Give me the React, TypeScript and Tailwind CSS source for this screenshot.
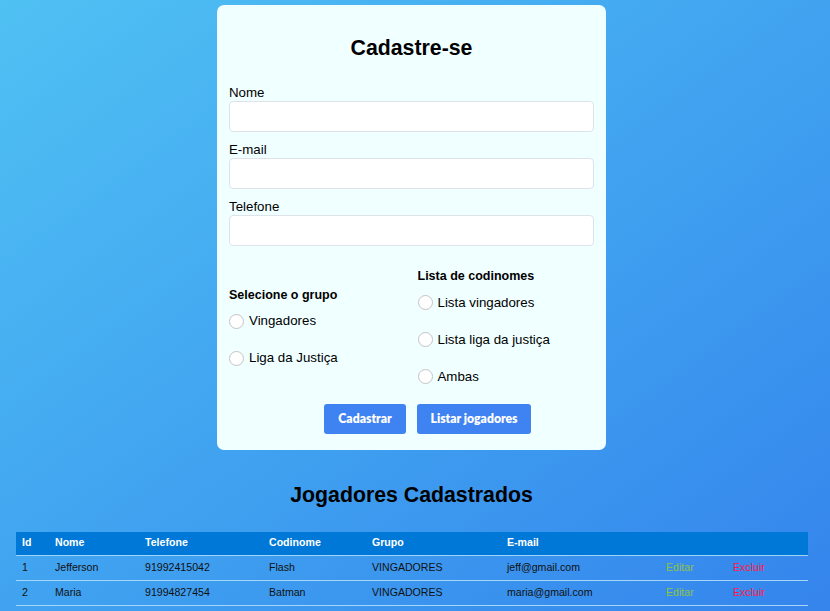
import React from "react";

const Radio = ({ label }: { label: string }) => (
  <div className="flex h-[37px] items-center">
    <span className="mr-[5px] inline-block h-[15px] w-[15px] rounded-full border border-[#c4c4c4] bg-white" />
    <span className="text-[13.3px] text-black">{label}</span>
  </div>
);

const Field = ({ label }: { label: string }) => (
  <div className="flex flex-col">
    <label className="h-[16px] text-[13.3px] leading-[16px] text-black">{label}</label>
    <div className="h-[31px] rounded-[4px] border border-[#dde3e8] bg-white" />
  </div>
);

const rows = [
  { id: 1, nome: "Jefferson", tel: "91992415042", cod: "Flash", grupo: "VINGADORES", email: "jeff@gmail.com" },
  { id: 2, nome: "Maria", tel: "91994827454", cod: "Batman", grupo: "VINGADORES", email: "maria@gmail.com" },
];

export default function App() {
  return (
    <div
      className="min-h-[611px] w-[830px] bg-gradient-to-br from-[#50c1f3] to-[#3584ec]"
      style={{ fontFamily: '"Liberation Sans", Arial, sans-serif' }}
    >
      <div className="flex w-[823px] flex-col items-center pt-[5px]">
        <div className="w-[389px] rounded-[7px] bg-[#f0ffff] px-[12px] pb-[16px] pt-[31px]">
          <h2 className="text-center text-[21.3px] font-bold leading-[24px] text-black">Cadastre-se</h2>
          <div className="mt-[25px] flex flex-col gap-[10px]">
            <Field label="Nome" />
            <Field label="E-mail" />
            <Field label="Telefone" />
          </div>
          <div className="mt-[22px] grid grid-cols-2 items-center gap-x-3">
            <div className="flex flex-col">
              <div className="h-[16px] text-[12.5px] font-bold leading-[16px] text-black">Selecione o grupo</div>
              <Radio label="Vingadores" />
              <Radio label="Liga da Justiça" />
            </div>
            <div className="flex flex-col">
              <div className="h-[16px] text-[12.5px] font-bold leading-[16px] text-black">Lista de codinomes</div>
              <Radio label="Lista vingadores" />
              <Radio label="Lista liga da justiça" />
              <Radio label="Ambas" />
            </div>
          </div>
          <div className="mt-[9px] flex gap-[11px] pl-[95px]" style={{ fontFamily: "Lato, sans-serif" }}>
            <button className="h-[30px] w-[82px] rounded-[3px] bg-[#3f83f2] text-[12.2px] font-extrabold text-white">
              Cadastrar
            </button>
            <button className="h-[30px] w-[114px] rounded-[3px] bg-[#3f83f2] text-[12.2px] font-extrabold text-white">
              Listar jogadores
            </button>
          </div>
        </div>
        <h2 className="mt-[33px] text-center text-[21.3px] font-bold leading-[24px] text-black">
          Jogadores Cadastrados
        </h2>
        <table className="ml-[16px] mt-[25px] w-[792px] self-start table-fixed border-collapse text-left text-[10.6px]">
          <colgroup>
            <col className="w-[33px]" />
            <col className="w-[90px]" />
            <col className="w-[124px]" />
            <col className="w-[103px]" />
            <col className="w-[135px]" />
            <col className="w-[159px]" />
            <col className="w-[67px]" />
            <col className="w-[81px]" />
          </colgroup>
          <thead>
            <tr className="h-[23px] border-b border-[#9fd3f7] bg-[#0078d7] text-white">
              <th className="pl-[6px] font-bold">Id</th>
              <th className="pl-[6px] font-bold">Nome</th>
              <th className="pl-[6px] font-bold">Telefone</th>
              <th className="pl-[6px] font-bold">Codinome</th>
              <th className="pl-[6px] font-bold">Grupo</th>
              <th className="pl-[6px] font-bold">E-mail</th>
              <th />
              <th />
            </tr>
          </thead>
          <tbody>
            {rows.map((r) => (
              <tr key={r.id} className="h-[25px] border-b border-[#a6d6f7] text-[#111]">
                <td className="pl-[6px]">{r.id}</td>
                <td className="pl-[6px]">{r.nome}</td>
                <td className="pl-[6px]">{r.tel}</td>
                <td className="pl-[6px]">{r.cod}</td>
                <td className="pl-[6px]">{r.grupo}</td>
                <td className="pl-[6px]">{r.email}</td>
                <td className="pl-[6px] text-[#8bc34a]">Editar</td>
                <td className="pl-[6px] text-[#ff1744]">Excluir</td>
              </tr>
            ))}
          </tbody>
        </table>
      </div>
    </div>
  );
}
